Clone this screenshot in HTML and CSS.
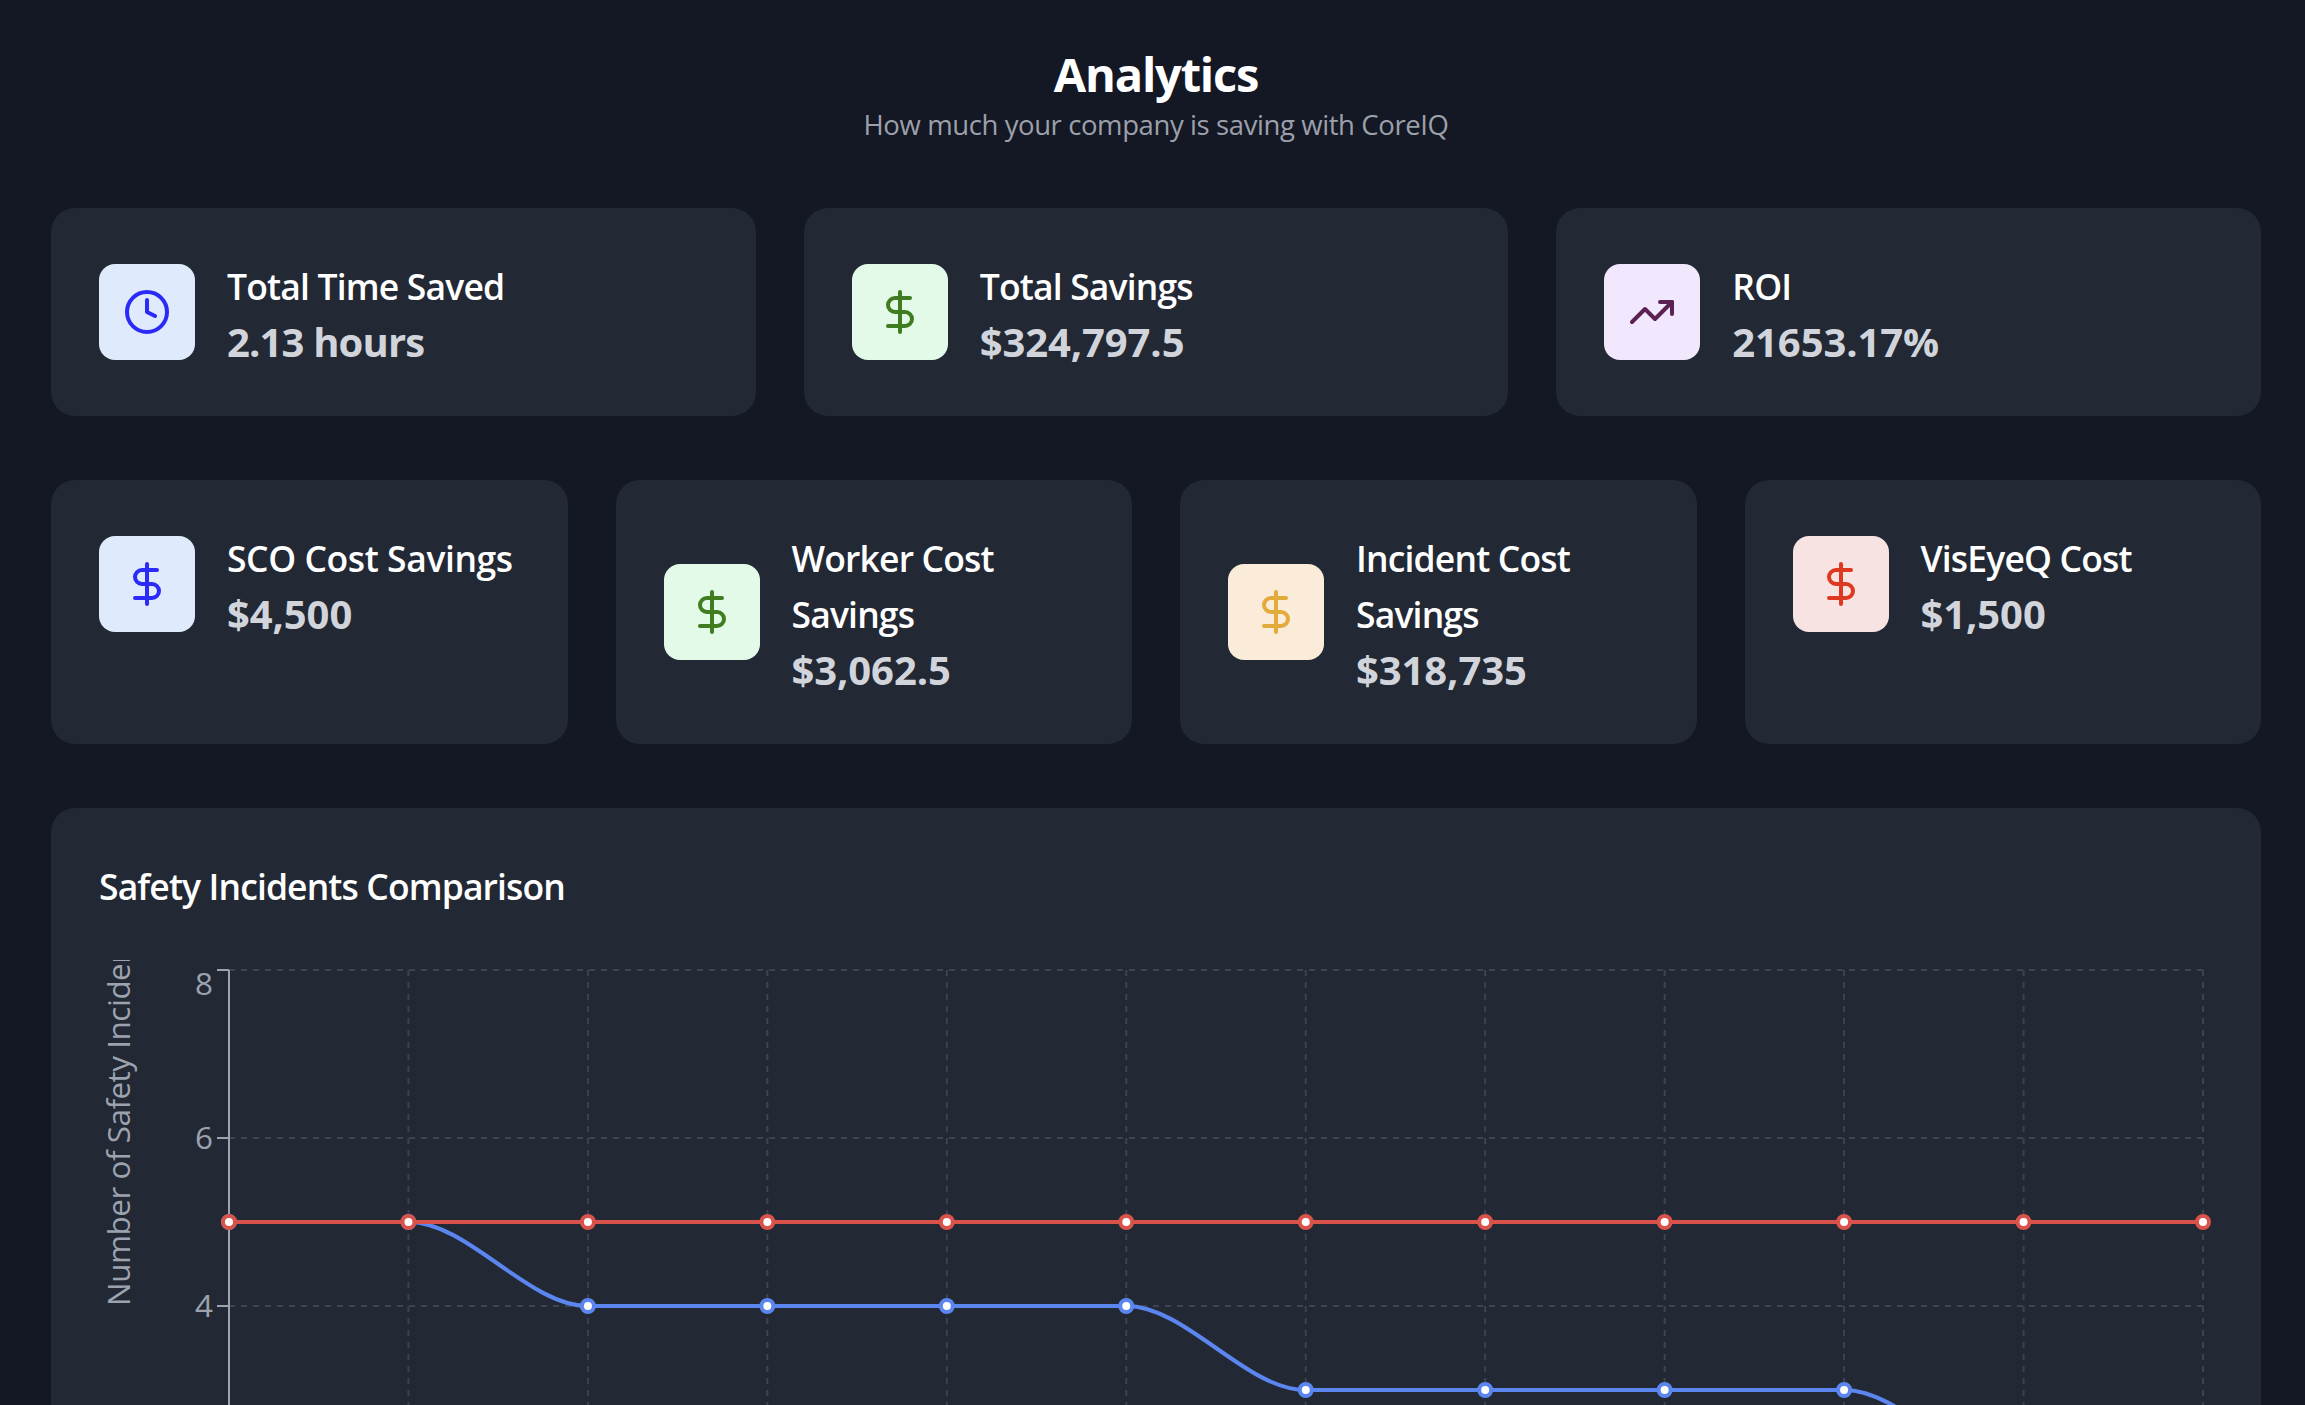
FILE: index.html
```
<!DOCTYPE html>
<html lang="en">
<head>
<meta charset="utf-8">
<title>Analytics</title>
<link rel="stylesheet" href="styles.css">
</head>
<body>
<svg class="defs" aria-hidden="true">
  <symbol id="dollar" viewBox="0 0 24 24"><path d="M12 2v20M17 5H9.5a3.5 3.5 0 0 0 0 7h5a3.5 3.5 0 0 1 0 7H6"/></symbol>
  <symbol id="clock" viewBox="0 0 24 24"><circle cx="12" cy="12" r="10"/><path d="M12 6v6l4 2"/></symbol>
  <symbol id="trend" viewBox="0 0 24 24"><path d="M22 7l-8.500 8.500-5-5L2 17"/><path d="M16 7h6v6"/></symbol>
</svg>
<main class="page">
  <header class="header">
    <h1 class="title">Analytics</h1>
    <p class="subtitle">How much your company is saving with CoreIQ</p>
  </header>

  <section class="grid three">
    <article class="card stat">
      <div class="badge blue"><svg class="icon"><use href="#clock"/></svg></div>
      <div class="info"><h2 class="label">Total Time Saved</h2><p class="value words">2.13 hours</p></div>
    </article>
    <article class="card stat">
      <div class="badge green"><svg class="icon"><use href="#dollar"/></svg></div>
      <div class="info"><h2 class="label">Total Savings</h2><p class="value">$324,797.5</p></div>
    </article>
    <article class="card stat">
      <div class="badge purple"><svg class="icon"><use href="#trend"/></svg></div>
      <div class="info"><h2 class="label">ROI</h2><p class="value">21653.17%</p></div>
    </article>
  </section>

  <section class="grid four">
    <article class="card">
      <div class="stat">
        <div class="badge blue"><svg class="icon"><use href="#dollar"/></svg></div>
        <div class="info"><h2 class="label wide">SCO Cost Savings</h2><p class="value">$4,500</p></div>
      </div>
    </article>
    <article class="card">
      <div class="stat">
        <div class="badge green"><svg class="icon"><use href="#dollar"/></svg></div>
        <div class="info"><h2 class="label">Worker Cost<br>Savings</h2><p class="value">$3,062.5</p></div>
      </div>
    </article>
    <article class="card">
      <div class="stat">
        <div class="badge orange"><svg class="icon"><use href="#dollar"/></svg></div>
        <div class="info"><h2 class="label">Incident Cost<br>Savings</h2><p class="value">$318,735</p></div>
      </div>
    </article>
    <article class="card">
      <div class="stat">
        <div class="badge red"><svg class="icon"><use href="#dollar"/></svg></div>
        <div class="info"><h2 class="label">VisEyeQ Cost</h2><p class="value">$1,500</p></div>
      </div>
    </article>
  </section>

  <section class="card chart-card">
    <h2 class="chart-title">Safety Incidents Comparison</h2>
    <svg class="chart" id="chart" viewBox="0 0 2114 445"></svg>
  </section>
</main>
<script src="chart.js"></script>
</body>
</html>
```
FILE: styles.css
```
* { box-sizing: border-box; margin: 0; padding: 0; }

body {
  background: #141724;
  color: #fff;
  font-family: "Open Sans", "Noto Sans", sans-serif;
}

.defs { display: none; }

.page {
  display: flex;
  flex-direction: column;
  gap: 64px;
  height: 1405px;
  padding: 44px 44px 0 51px;
}

.header { height: 100px; text-align: center; }

.title {
  font-size: 47px;
  line-height: 61px;
  font-weight: 700;
  letter-spacing: -1.2px;
}

.subtitle {
  font-size: 27.5px;
  line-height: 40px;
  letter-spacing: -0.4px;
  color: #9ca0aa;
}

.grid { display: grid; gap: 48px; }
.three { grid-template-columns: repeat(3, 1fr); }
.four { grid-template-columns: repeat(4, 1fr); }

.card {
  min-width: 0;
  padding: 48px;
  border-radius: 24px;
  background: #222834;
}

.stat { display: flex; align-items: center; gap: 32px; }

.badge {
  display: flex;
  flex: none;
  align-items: center;
  justify-content: center;
  width: 96px;
  height: 96px;
  border-radius: 16px;
}

.blue { background: #dfeafc; color: #2b2bf8; }
.green { background: #e3fae8; color: #3f7d20; }
.purple { background: #f1e8fd; color: #5a2152; }
.orange { background: #faecd8; color: #e3aa3c; }
.red { background: #f6e3e2; color: #df3820; }

.icon {
  width: 48px;
  height: 48px;
  fill: none;
  stroke: currentColor;
  stroke-width: 2;
  stroke-linecap: round;
  stroke-linejoin: round;
}

.info { margin: 2px 0 -2px; white-space: nowrap; }

.label {
  font-size: 35.5px;
  line-height: 56px;
  font-weight: 600;
  letter-spacing: -0.83px;
}

.label.wide { letter-spacing: -0.42px; }

.value {
  margin-top: -1px;
  font-size: 40px;
  line-height: 57px;
  font-weight: 700;
  letter-spacing: -0.1px;
  color: #d1d5db;
}

.words { letter-spacing: -0.85px; }

.chart-card {
  flex: 1;
  padding-bottom: 0;
  border-radius: 24px 24px 0 0;
}

.chart-title {
  padding-top: 2px;
  margin-bottom: 46px;
  font-size: 35.5px;
  line-height: 56px;
  font-weight: 600;
  letter-spacing: -0.88px;
}

.chart { display: block; width: 2114px; height: 445px; }
.chart text { fill: #9ca3af; font-size: 31.4px; }
.axis-label { letter-spacing: -0.47px; }
.gridline { stroke: #3d4350; stroke-width: 2; stroke-dasharray: 6 6; }
.axis { stroke: #9ca3af; stroke-width: 2; }
.series { fill: none; stroke-width: 4; }
.dot { fill: #fff; stroke-width: 4; }
.without { stroke: #d9534b; }
.with { stroke: #5b86f0; }
```
FILE: chart.js
```
const chart = document.getElementById('chart');
const left = 130, right = 2104, top8 = 10, unit = 84;
const baseline = [5, 5, 5, 5, 5, 5, 5, 5, 5, 5, 5, 5];
const actual = [5, 5, 4, 4, 4, 4, 3, 3, 3, 3, 2, 2];
const x = i => left + (right - left) * i / (baseline.length - 1);
const y = v => top8 + (8 - v) * unit;

function curve(values) {
  let d = `M${x(0)} ${y(values[0])}`;
  for (let i = 1; i < values.length; i++) {
    const step = (x(i) - x(i - 1)) / 3;
    d += `C${x(i - 1) + step} ${y(values[i - 1])} ${x(i) - step} ${y(values[i])} ${x(i)} ${y(values[i])}`;
  }
  return d;
}

function series(values, name) {
  const dots = values.map((v, i) => `<circle class="dot ${name}" cx="${x(i)}" cy="${y(v)}" r="6"/>`).join('');
  return `<path class="series ${name}" d="${curve(values)}"/>${dots}`;
}

let out = '';
for (const v of [8, 6, 4]) {
  out += `<path class="gridline" d="M${left} ${y(v)}H${right}"/>`;
}
for (let i = 1; i < baseline.length; i++) {
  out += `<path class="gridline" d="M${x(i)} ${y(8)}V${y(0)}"/>`;
}
out += `<path class="axis" d="M${left} ${y(8)}V${y(0)}"/>`;
for (const v of [8, 6, 4]) {
  const shift = v === 8 ? 25 : 11;
  out += `<path class="axis" d="M${left - 12} ${y(v)}H${left}"/>`;
  out += `<text x="${left - 16}" y="${y(v) + shift}" text-anchor="end">${v}</text>`;
}
out += `<text class="axis-label" transform="translate(31 346) rotate(-90)">Number of Safety Incidents</text>`;
out += series(actual, 'with') + series(baseline, 'without');
chart.innerHTML = out;
```
